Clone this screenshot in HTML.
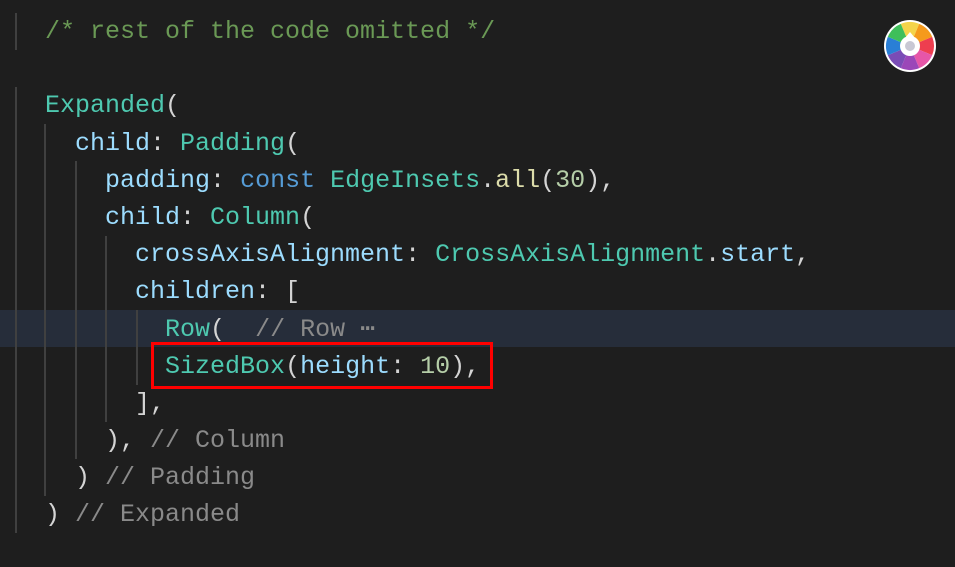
<!DOCTYPE html>
<html><head><style>
html,body{margin:0;padding:0;background:#1e1e1e;width:955px;height:567px;overflow:hidden}
.code{position:absolute;left:0;top:13px;font-family:"Liberation Mono",monospace;font-size:25px;color:#d4d4d4}
.l{height:37.2px;line-height:37.2px;padding-left:45px;white-space:pre}
.g{position:absolute;width:2px;background:#404040}
.c{color:#6a9955}.t{color:#4ec9b0}.p{color:#9cdcfe}.k{color:#569cd6}.n{color:#b5cea8}.m{color:#dcdcaa}.gr{color:#8a8a8a}
</style></head><body>
<div style="position:absolute;left:0;top:310px;width:955px;height:37px;background:#262d3a"></div>
<div class="g" style="left:15px;top:13px;height:37px"></div>
<div class="g" style="left:15px;top:87px;height:446px"></div>
<div class="g" style="left:44px;top:124px;height:372px"></div>
<div class="g" style="left:75px;top:161px;height:298px"></div>
<div class="g" style="left:105px;top:236px;height:186px"></div>
<div class="g" style="left:136px;top:310px;height:75px"></div>
<div class="code"><div class="l"><span class="c">/* rest of the code omitted */</span></div><div class="l"> </div><div class="l"><span class="t">Expanded</span>(</div><div class="l">  <span class="p">child</span>: <span class="t">Padding</span>(</div><div class="l">    <span class="p">padding</span>: <span class="k">const</span> <span class="t">EdgeInsets</span>.<span class="m">all</span>(<span class="n">30</span>),</div><div class="l">    <span class="p">child</span>: <span class="t">Column</span>(</div><div class="l">      <span class="p">crossAxisAlignment</span>: <span class="t">CrossAxisAlignment</span>.<span class="p">start</span>,</div><div class="l">      <span class="p">children</span>: [</div><div class="l">        <span class="t">Row</span>(  <span class="gr">// Row ⋯</span></div><div class="l">        <span class="t">SizedBox</span>(<span class="p">height</span>: <span class="n">10</span>),</div><div class="l">      ],</div><div class="l">    ), <span class="gr">// Column</span></div><div class="l">  ) <span class="gr">// Padding</span></div><div class="l">) <span class="gr">// Expanded</span></div></div>
<div style="position:absolute;left:151px;top:342px;width:336px;height:41px;border:3px solid #f00"></div>
<svg style="position:absolute;left:884px;top:20px" width="52" height="52" viewBox="-26 -26 52 52">
<circle r="26" fill="#fff"/>
<g transform="rotate(-22.5)">
<path d="M0 0L0 -24A24 24 0 0 1 16.97 -16.97Z" fill="#f4d44a"/>
<path d="M0 0L16.97 -16.97A24 24 0 0 1 24 0Z" fill="#f59a1c"/>
<path d="M0 0L24 0A24 24 0 0 1 16.97 16.97Z" fill="#ee3e4f"/>
<path d="M0 0L16.97 16.97A24 24 0 0 1 0 24Z" fill="#e656a8"/>
<path d="M0 0L0 24A24 24 0 0 1 -16.97 16.97Z" fill="#9b47b8"/>
<path d="M0 0L-16.97 16.97A24 24 0 0 1 -24 0Z" fill="#7a4cb6"/>
<path d="M0 0L-24 0A24 24 0 0 1 -16.97 -16.97Z" fill="#2a7fd6"/>
<path d="M0 0L-16.97 -16.97A24 24 0 0 1 0 -24Z" fill="#3fbf5a"/>
</g>
<circle r="10" fill="#fff"/><path d="M-5 -8L0 -14L5 -8Z" fill="#fff"/>
<circle r="5" fill="#c8c8d4"/>
</svg>
</body></html>
